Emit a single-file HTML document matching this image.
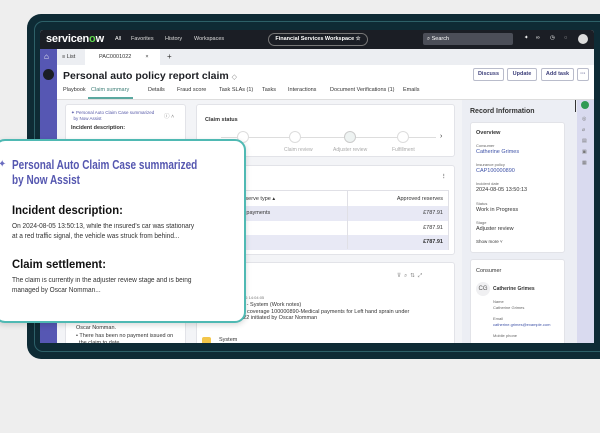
<!DOCTYPE html>
<html><head><meta charset="utf-8"><style>
*{box-sizing:border-box;margin:0;padding:0}
body{width:600px;height:433px;overflow:hidden;background:#eeeeee;font-family:"Liberation Sans",sans-serif;position:relative;color:#1d1f24}
.a{position:absolute}
.frame{left:27px;top:14px;width:600px;height:345px;background:#0e2b35;border-radius:14px}
.inner{left:34px;top:21px;width:600px;height:331px;border:1px solid #2d6068;border-radius:9px}
.screen{left:40px;top:30px;width:554px;height:313px;background:#f3f4f7;overflow:hidden;border-radius:3px 3px 0 0}
.nav{left:0;top:0;width:554px;height:19px;background:#1b1e25;color:#fff;font-size:5.5px}
.side{left:0;top:19px;width:17px;height:300px;background:#5657b3}
.tabbar{left:17px;top:19px;width:537px;height:16px;background:#eceef2;font-size:5.5px;color:#333}
.hdr{left:17px;top:35px;width:537px;height:35px;background:#fff;border-bottom:1px solid #ddd}
.card{background:#fff;border:1px solid #e2e3e8;border-radius:3px}
.btn{top:38px;height:13px;border:1px solid #b9bccb;border-radius:2px;font-size:5.5px;color:#3d3f7a;font-weight:bold;text-align:center;line-height:11px}
.t{font-size:5.5px;color:#333;position:absolute;white-space:nowrap}
.pop{left:-6px;top:139px;width:252px;height:184px;background:#fff;border:2px solid #4fb9b3;border-radius:11px;box-shadow:0 2px 6px rgba(0,0,0,.15)}
.pop .a{white-space:nowrap;transform-origin:left center}
</style></head><body>
<div class="a frame"></div>
<div class="a inner"></div>
<div class="a screen">
 <div class="a nav">
  <div class="a" style="left:6px;top:3px;font-size:11px;font-weight:bold;letter-spacing:-.2px">servicen<span style="color:#62d84e">o</span>w</div>
  <div class="a" style="left:75px;top:6px">All</div>
  <div class="a" style="left:91px;top:6px;color:#ddd">Favorites</div>
  <div class="a" style="left:125px;top:6px;color:#ddd">History</div>
  <div class="a" style="left:154px;top:6px;color:#ddd">Workspaces</div>
  <div class="a" style="left:228px;top:3px;width:100px;height:13px;border:1px solid #777;border-radius:7px;text-align:center;line-height:11px;font-weight:bold">Financial Services Workspace ☆</div>
  <div class="a" style="left:383px;top:3px;width:90px;height:12px;background:#4b4e58;border-radius:2px;padding-left:4px;line-height:12px">⌕ Search</div>
  <div class="a" style="left:484px;top:5px">✦</div><div class="a" style="left:496px;top:5px">∞</div><div class="a" style="left:510px;top:5px">◷</div><div class="a" style="left:524px;top:5px">◌</div>
  <div class="a" style="left:538px;top:4px;width:10px;height:10px;border-radius:50%;background:#ddd"></div>
 </div>
 <div class="a side">
  <div class="a" style="left:4px;top:3px;color:#fff;font-size:8px">⌂</div>
  <div class="a" style="left:3px;top:20px;width:11px;height:11px;border-radius:50%;background:#1b1e25"></div>
 </div>
 <div class="a tabbar">
  <div class="a" style="left:5px;top:5px">≡ List</div>
  <div class="a" style="left:28px;top:0;width:75px;height:16px;background:#fff;padding:5px 0 0 14px">PAC0001022<span style="margin-left:14px">×</span></div>
  <div class="a" style="left:110px;top:3px;font-size:8px">+</div>
 </div>
 <div class="a hdr">
  <div class="a" style="left:6px;top:5px;font-size:10.5px;font-weight:bold">Personal auto policy report claim <span style="font-weight:normal;color:#888;font-size:7px">◇</span></div>
  <div class="t" style="left:6px;top:22px">Playbook</div>
  <div class="t" style="left:34px;top:22px;color:#3a7c74">Claim summary</div>
  <div class="a" style="left:31px;top:32px;width:45px;height:2px;background:#5aa89f"></div>
  <div class="t" style="left:91px;top:22px">Details</div>
  <div class="t" style="left:120px;top:22px">Fraud score</div>
  <div class="t" style="left:162px;top:22px">Task SLAs (1)</div>
  <div class="t" style="left:205px;top:22px">Tasks</div>
  <div class="t" style="left:231px;top:22px">Interactions</div>
  <div class="t" style="left:273px;top:22px">Document Verifications (1)</div>
  <div class="t" style="left:346px;top:22px">Emails</div>
 </div>
 <div class="a btn" style="left:433px;width:31px">Discuss</div>
 <div class="a btn" style="left:467px;width:30px">Update</div>
 <div class="a btn" style="left:501px;width:33px">Add task</div>
 <div class="a btn" style="left:537px;width:12px">···</div>
 <div class="a card" style="left:25px;top:74px;width:121px;height:250px">
  <div class="t" style="left:5px;top:5px;color:#5558a8;font-size:4.5px">✦ Personal Auto Claim Case summarized<br>&nbsp;&nbsp;by Now Assist</div>
  <div class="t" style="left:98px;top:7px;color:#888">ⓘ ˄</div>
  <div class="t" style="left:5px;top:20px;font-weight:bold;font-size:5.5px">Incident description:</div>
  <div class="t" style="left:10px;top:220px;line-height:7.5px">Oscar Nomman.<br>• There has been no payment issued on<br>&nbsp;&nbsp;the claim to date.</div>
 </div>
 <div class="a card" style="left:156px;top:74px;width:259px;height:53px">
  <div class="t" style="left:8px;top:12px;font-weight:bold">Claim status</div>
  <div class="a" style="left:24px;top:32px;width:215px;height:1px;background:#ddd"></div>
  <div class="a" style="left:40px;top:26px;width:12px;height:12px;border-radius:50%;border:1px solid #ddd;background:#fff"></div>
  <div class="a" style="left:92px;top:26px;width:12px;height:12px;border-radius:50%;border:1px solid #ddd;background:#fff"></div>
  <div class="a" style="left:147px;top:26px;width:12px;height:12px;border-radius:50%;border:1px solid #ccc;background:#eef3f2"></div>
  <div class="a" style="left:200px;top:26px;width:12px;height:12px;border-radius:50%;border:1px solid #ddd;background:#fff"></div>
  <div class="t" style="left:243px;top:28px;font-size:7px">›</div>
  <div class="t" style="left:87px;top:42px;color:#aaa;font-size:5px">Claim review</div>
  <div class="t" style="left:136px;top:42px;color:#aaa;font-size:5px">Adjuster review</div>
  <div class="t" style="left:195px;top:42px;color:#aaa;font-size:5px">Fulfillment</div>
 </div>
 <div class="a card" style="left:156px;top:135px;width:259px;height:90px">
  <div class="t" style="left:8px;top:9px">Financials</div>
  <div class="t" style="left:244px;top:8px;font-weight:bold">⋮</div>
  <div class="a" style="left:6px;top:24px;width:246px;height:60px;border:1px solid #e0e0e6">
   <div class="t" style="left:2px;top:5px">Coverage → Reserve type ▴</div>
   <div class="t" style="right:5px;top:5px">Approved reserves</div>
   <div class="a" style="left:0;top:15px;width:244px;height:15px;background:#e8e9f5"></div>
   <div class="t" style="left:14px;top:19px">1 - Medical payments</div>
   <div class="t" style="right:5px;top:19px">£787.91</div>
   <div class="t" style="right:5px;top:34px">£787.91</div>
   <div class="a" style="left:0;top:44px;width:244px;height:15px;background:#e8e9f5"></div>
   <div class="t" style="right:5px;top:48px;font-weight:bold">£787.91</div>
   <div class="a" style="left:143px;top:0;width:1px;height:58px;background:#e0e0e6"></div>
  </div>
 </div>
 <div class="a card" style="left:156px;top:232px;width:259px;height:90px">
  <div class="t" style="left:8px;top:11px;font-size:6px">Activities</div>
  <div class="t" style="left:200px;top:10px;color:#888">⊽ &nbsp;⌕ &nbsp;⇅ &nbsp;⤢</div>
  <div class="t" style="left:30px;top:32px;font-size:4px;color:#777">2024-08-06 14:04:05</div>
  <div class="t" style="left:20px;top:39px;line-height:6.5px">2024-08-05 - System (Work notes)<br>Reserve for coverage 100000890-Medical payments for Left hand sprain under<br>PAC0001022 initiated by Oscar Nomman</div>
  <div class="a" style="left:5px;top:74px;width:9px;height:8px;border-radius:2px;background:#f3c64a"></div>
  <div class="t" style="left:22px;top:74px">System</div>
 </div>
 <div class="a" style="left:422px;top:70px;width:115px;height:260px;background:#eceef4"></div>
 <div class="t" style="left:430px;top:78px;font-size:7px;font-weight:bold">Record Information</div>
 <div class="a card" style="left:430px;top:92px;width:95px;height:131px">
  <div class="t" style="left:5px;top:7px;font-weight:bold">Overview</div>
  <div class="t" style="left:5px;top:20px;font-size:4px;color:#666">Consumer</div>
  <div class="t" style="left:5px;top:26px;color:#3f53a8">Catherine Grimes</div>
  <div class="t" style="left:5px;top:39px;font-size:4px;color:#666">Insurance policy</div>
  <div class="t" style="left:5px;top:45px;color:#3f53a8">CAP100000890</div>
  <div class="t" style="left:5px;top:58px;font-size:4px;color:#666">Incident date</div>
  <div class="t" style="left:5px;top:64px">2024-08-05 13:50:13</div>
  <div class="t" style="left:5px;top:78px;font-size:4px;color:#666">Status</div>
  <div class="t" style="left:5px;top:84px">Work in Progress</div>
  <div class="t" style="left:5px;top:97px;font-size:4px;color:#666">Stage</div>
  <div class="t" style="left:5px;top:103px">Adjuster review</div>
  <div class="t" style="left:5px;top:116px;font-size:4.5px">Show more ˅</div>
 </div>
 <div class="a card" style="left:430px;top:229px;width:95px;height:100px">
  <div class="t" style="left:5px;top:8px">Consumer</div>
  <div class="a" style="left:5px;top:22px;width:14px;height:14px;border-radius:50%;background:#f0f0f2;font-size:6px;color:#555;text-align:center;line-height:14px">CG</div>
  <div class="t" style="left:22px;top:26px;font-weight:bold;font-size:5px">Catherine Grimes</div>
  <div class="t" style="left:22px;top:39px;font-size:4px;color:#666;line-height:6px">Name<br>Catherine Grimes</div>
  <div class="t" style="left:22px;top:56px;font-size:4px;color:#666;line-height:6px">Email<br><span style="color:#3f53a8">catherine.grimes@example.com</span></div>
  <div class="t" style="left:22px;top:73px;font-size:4px;color:#666">Mobile phone</div>
 </div>
 <div class="a" style="left:537px;top:70px;width:17px;height:250px;background:#d9daef"></div>
 <div class="a" style="left:535px;top:70px;width:1px;height:12px;background:#333"></div>
 <div class="a" style="left:541px;top:71px;width:8px;height:8px;border-radius:50%;background:#2f9a55"></div>
 <div class="t" style="left:542px;top:84px;color:#777;font-size:5px;line-height:11px">◎<br>⌀<br>▤<br>▣<br>▦</div>
</div>
<div class="a pop">
 <div class="a" style="left:2px;top:18px;color:#6a6cc0;font-size:10px">✦</div>
 <div class="a" style="left:16px;top:17px;font-size:12.5px;font-weight:bold;color:#5557b0;line-height:15px;transform:scaleX(.8)">Personal Auto Claim Case summarized</div>
 <div class="a" style="left:16px;top:32px;font-size:12.5px;font-weight:bold;color:#5557b0;line-height:15px;transform:scaleX(.8)">by Now Assist</div>
 <div class="a" style="left:16px;top:63px;font-size:11.5px;font-weight:bold;color:#111;line-height:14px;transform:scaleX(.98)">Incident description:</div>
 <div class="a" style="left:16px;top:81px;font-size:7px;color:#333;line-height:10px;transform:scaleX(.93)">On 2024-08-05 13:50:13, while the insured's car was stationary<br>at a red traffic signal, the vehicle was struck from behind...</div>
 <div class="a" style="left:16px;top:117px;font-size:11.5px;font-weight:bold;color:#111;line-height:14px;transform:scaleX(.98)">Claim settlement:</div>
 <div class="a" style="left:16px;top:135px;font-size:7px;color:#333;line-height:10px;transform:scaleX(.93)">The claim is currently in the adjuster review stage and is being<br>managed by Oscar Nomman...</div>
</div>
</body></html>
